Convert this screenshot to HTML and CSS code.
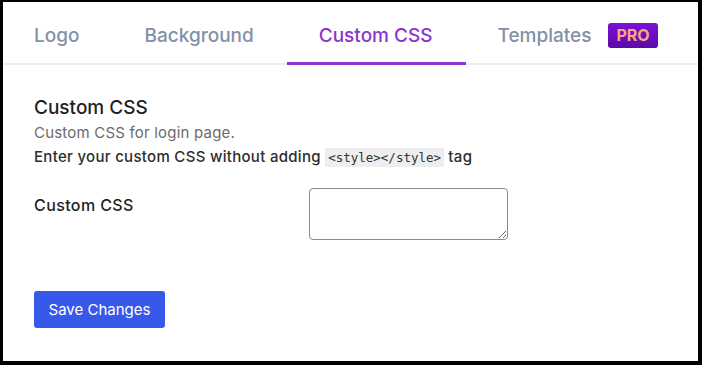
FILE: index.html
```html
<!DOCTYPE html>
<html lang="en">
<head>
  <meta charset="UTF-8">
  <title>Custom CSS</title>
  <link rel="stylesheet" href="styles.css">
</head>
<body>
  <div class="frame">
    <nav class="tabs">
      <a class="tab">Logo</a>
      <a class="tab">Background</a>
      <a class="tab active">Custom CSS</a>
      <a class="tab">Templates <span class="pro">PRO</span></a>
    </nav>

    <div class="panel">
      <h2>Custom CSS</h2>
      <p class="desc">Custom CSS for login page.</p>
      <p class="hint">Enter your custom CSS without adding <code>&lt;style&gt;&lt;/style&gt;</code> tag</p>

      <div class="field">
        <label for="css">Custom CSS</label>
        <textarea id="css"></textarea>
      </div>

      <button class="save">Save Changes</button>
    </div>
  </div>
</body>
</html>
```

FILE: styles.css
```css
* {
  box-sizing: border-box;
}
body {
  margin: 0;
  font-family: Inter, "Liberation Sans", sans-serif;
  background: #fff;
}
.frame {
  width: 702px;
  height: 365px;
  border: solid #000;
  border-width: 2px 4px 4px 3px;
  background: #fff;
}
.tabs {
  display: flex;
  height: 63px;
  border-bottom: 2px solid #eceef1;
}
.tab {
  display: flex;
  align-items: center;
  gap: 17px;
  padding: 6px 33px 0 32px;
  margin-bottom: -2px;
  font-size: 19px;
  font-weight: 500;
  color: #8291a8;
  border-bottom: 3px solid transparent;
}
.tab:first-child {
  padding-left: 31px;
}
.tab.active {
  color: #8b35cc;
  border-bottom-color: #8b35cc;
}
.pro {
  display: inline-block;
  padding: 3px 8px;
  border-radius: 3px;
  background: linear-gradient(180deg, #7a12d6, #5b0aa8);
  color: #f9a878;
  font-size: 16px;
  font-weight: 700;
  line-height: 19px;
}
.panel {
  padding: 31px 31px 0;
}
h2 {
  margin: 0;
  font-size: 19px;
  font-weight: 500;
  color: #1f1f1f;
  line-height: 24px;
}
.desc {
  margin: 3px 0 0;
  font-size: 15px;
  letter-spacing: 0.2px;
  color: #6b6b6b;
  line-height: 20px;
}
.hint {
  margin: 4px 0 0;
  font-size: 15px;
  letter-spacing: 0.3px;
  font-weight: 500;
  color: #2d2d2d;
  line-height: 20px;
}
code {
  font-family: "DejaVu Sans Mono", monospace;
  font-size: 12.5px;
  letter-spacing: 0;
  background: #eeeeee;
  padding: 2px 3px;
  color: #333;
}
.field {
  display: flex;
  margin-top: 20px;
}
label {
  width: 275px;
  padding-top: 7px;
  font-size: 16px;
  letter-spacing: 0.4px;
  font-weight: 500;
  color: #1f1f1f;
}
textarea {
  width: 199px;
  height: 52px;
  border: 1px solid #8c8c8c;
  border-radius: 4px;
}
.save {
  margin-top: 51px;
  width: 131px;
  height: 37px;
  border: none;
  border-radius: 3px;
  background: #3858e9;
  color: #fff;
  font-family: inherit;
  font-size: 15px;
  cursor: pointer;
}
```
